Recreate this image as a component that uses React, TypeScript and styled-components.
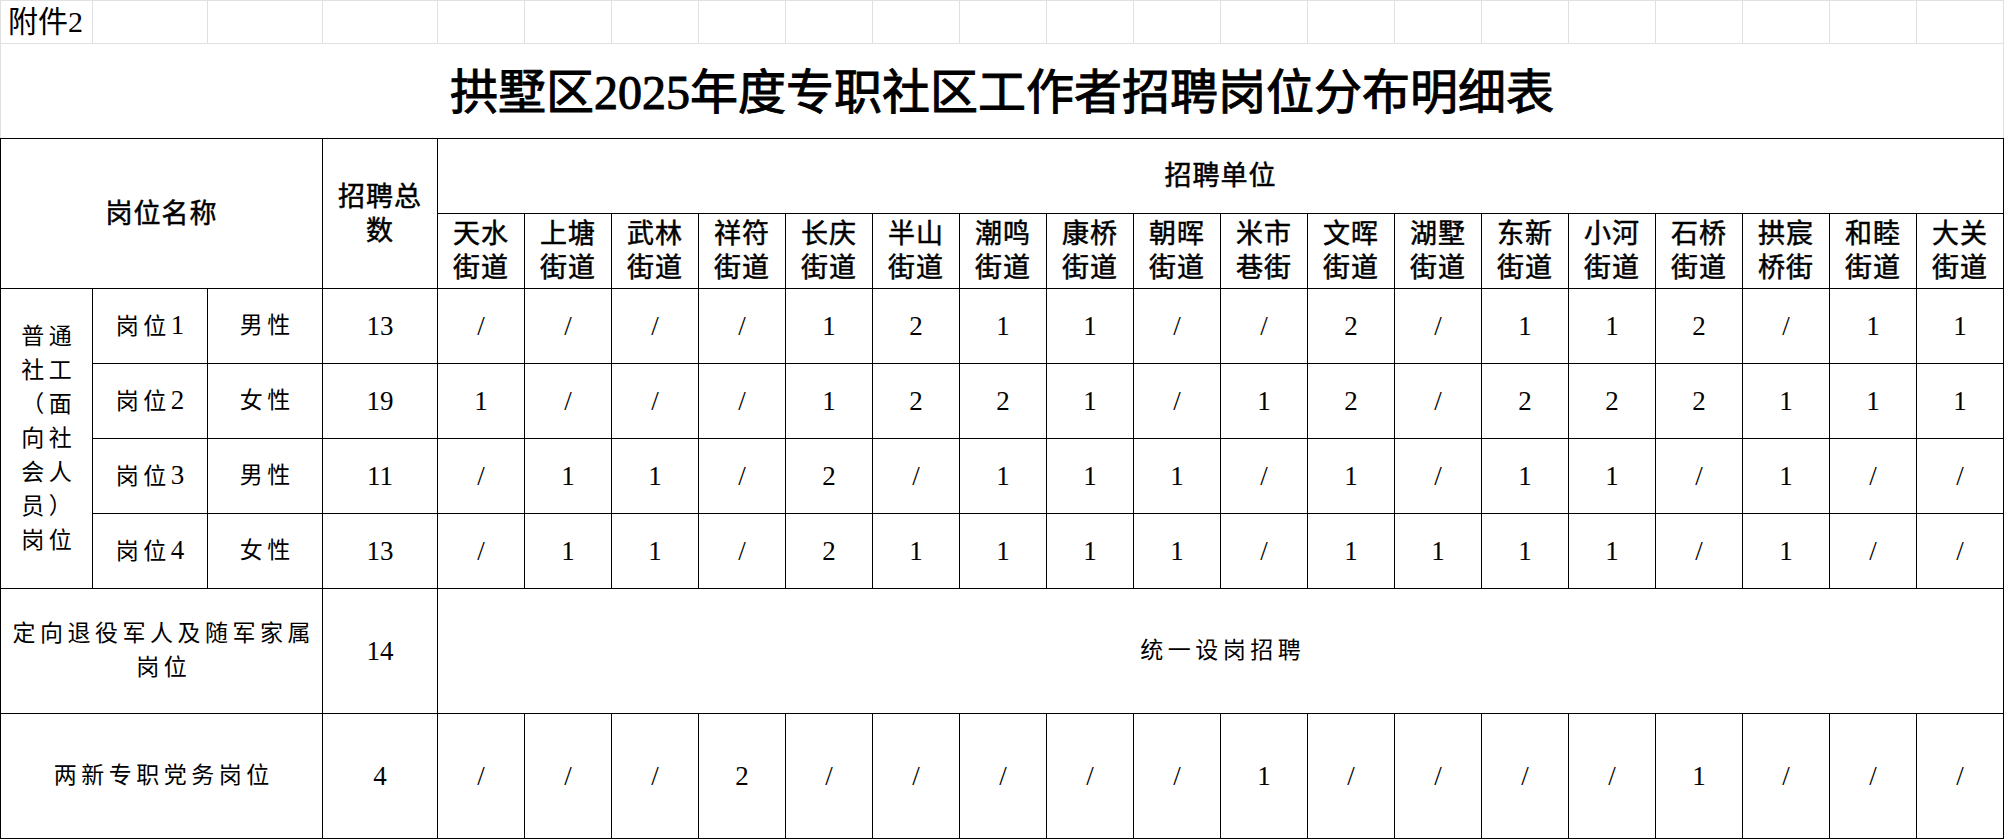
import React from "react";
import styled, { createGlobalStyle } from "styled-components";

const GlobalStyle = createGlobalStyle`
  html, body {
    margin: 0;
    padding: 0;
    background: #ffffff;
  }
  body {
    font-family: "Liberation Serif", "Noto Sans CJK SC", serif;
    color: #000000;
  }
`;

const streets = [
  "天水街道",
  "上塘街道",
  "武林街道",
  "祥符街道",
  "长庆街道",
  "半山街道",
  "潮鸣街道",
  "康桥街道",
  "朝晖街道",
  "米市巷街",
  "文晖街道",
  "湖墅街道",
  "东新街道",
  "小河街道",
  "石桥街道",
  "拱宸桥街",
  "和睦街道",
  "大关街道",
];

const posts = [
  { name: "岗位", no: "1", sex: "男性", total: "13", values: "/ / / / 1 2 1 1 / / 2 / 1 1 2 / 1 1" },
  { name: "岗位", no: "2", sex: "女性", total: "19", values: "1 / / / 1 2 2 1 / 1 2 / 2 2 2 1 1 1" },
  { name: "岗位", no: "3", sex: "男性", total: "11", values: "/ 1 1 / 2 / 1 1 1 / 1 / 1 1 / 1 / /" },
  { name: "岗位", no: "4", sex: "女性", total: "13", values: "/ 1 1 / 2 1 1 1 1 / 1 1 1 1 / 1 / /" },
];

const partyValues = "/ / / 2 / / / / / 1 / / / / 1 / / /";

const groupLines = ["普通", "社工", "（面", "向社", "会人", "员）", "岗位"];

const Sheet = styled.table`
  width: 2004px;
  border-collapse: collapse;
  table-layout: fixed;
`;

const Row = styled.tr<{ $h: number }>`
  height: ${({ $h }) => $h}px;
`;

const GridCell = styled.td`
  border: 1px solid #e0e0e0;
  padding: 0;
  line-height: 1;
`;

const NoteCell = styled(GridCell)`
  font-size: 30px;
  padding-left: 7px;
  text-align: left;
  vertical-align: middle;
  white-space: nowrap;
`;

const TitleCell = styled.td`
  border: 1px solid #e0e0e0;
  border-bottom: 1px solid #000000;
  text-align: center;
  vertical-align: middle;
  font-size: 48px;
  line-height: 1;
  -webkit-text-stroke: 1px #000000;
  padding: 4px 0 0;
`;

const Cell = styled.td`
  border: 1px solid #000000;
  padding: 0;
  text-align: center;
  vertical-align: middle;
  line-height: 1;
`;

const HeadCell = styled(Cell)`
  font-size: 27px;
  -webkit-text-stroke: 0.5px #000000;
  letter-spacing: 1px;
  line-height: 34px;
`;

const BodyCell = styled(Cell)`
  font-size: 23px;
  letter-spacing: 4.5px;
  line-height: 34px;
  padding-left: 4.5px;
`;

const NumCell = styled(Cell)`
  font-size: 27px;
`;

const Digit = styled.span`
  font-size: 27px;
`;

const Line = styled.div`
  white-space: nowrap;
`;

const Stack = ({ lines }: { lines: string[] }) => (
  <>
    {lines.map((l, i) => (
      <Line key={i}>{l}</Line>
    ))}
  </>
);

const colWidths = [92, 115, 115, 115, ...streets.map(() => 87)];

export default function App() {
  return (
    <>
      <GlobalStyle />
      <Sheet>
        <colgroup>
          {colWidths.map((w, i) => (
            <col key={i} style={{ width: w }} />
          ))}
        </colgroup>
        <tbody>
          <Row $h={43}>
            <NoteCell>附件2</NoteCell>
            {colWidths.slice(1).map((_, i) => (
              <GridCell key={i} />
            ))}
          </Row>
          <Row $h={95}>
            <TitleCell colSpan={22}>拱墅区2025年度专职社区工作者招聘岗位分布明细表</TitleCell>
          </Row>
          <Row $h={75}>
            <HeadCell colSpan={3} rowSpan={2}>
              岗位名称
            </HeadCell>
            <HeadCell rowSpan={2}>
              <Stack lines={["招聘总", "数"]} />
            </HeadCell>
            <HeadCell colSpan={18}>招聘单位</HeadCell>
          </Row>
          <Row $h={75}>
            {streets.map((s) => (
              <HeadCell key={s}>
                <Stack lines={[s.slice(0, 2), s.slice(2)]} />
              </HeadCell>
            ))}
          </Row>
          {posts.map((p, idx) => (
            <Row $h={75} key={p.no}>
              {idx === 0 && (
                <BodyCell rowSpan={4}>
                  <Stack lines={groupLines} />
                </BodyCell>
              )}
              <BodyCell>
                {p.name}
                <Digit>{p.no}</Digit>
              </BodyCell>
              <BodyCell>{p.sex}</BodyCell>
              <NumCell>{p.total}</NumCell>
              {p.values.split(" ").map((v, i) => (
                <NumCell key={i}>{v}</NumCell>
              ))}
            </Row>
          ))}
          <Row $h={125}>
            <BodyCell colSpan={3}>
              <Stack lines={["定向退役军人及随军家属", "岗位"]} />
            </BodyCell>
            <NumCell>14</NumCell>
            <BodyCell colSpan={18}>统一设岗招聘</BodyCell>
          </Row>
          <Row $h={125}>
            <BodyCell colSpan={3}>两新专职党务岗位</BodyCell>
            <NumCell>4</NumCell>
            {partyValues.split(" ").map((v, i) => (
              <NumCell key={i}>{v}</NumCell>
            ))}
          </Row>
        </tbody>
      </Sheet>
    </>
  );
}
